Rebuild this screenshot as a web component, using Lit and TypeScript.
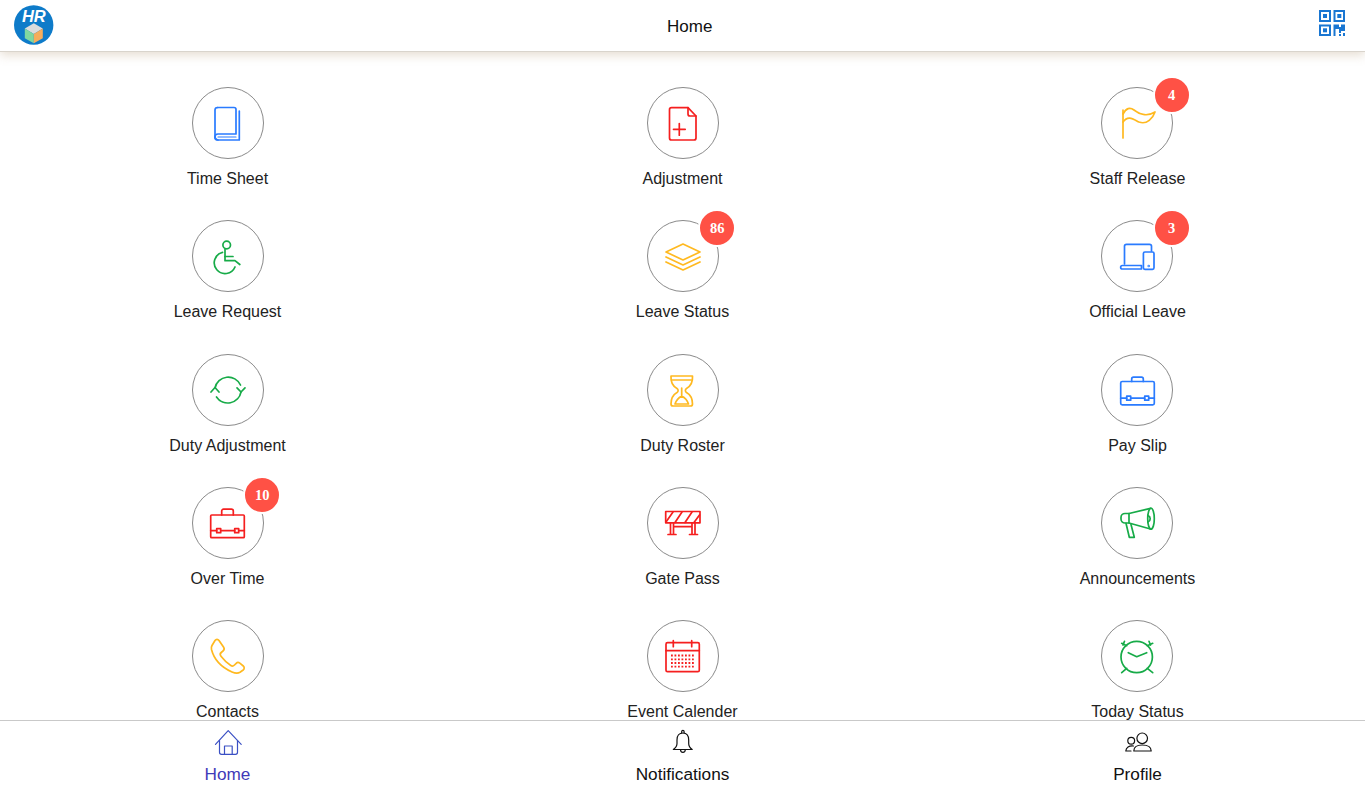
import { LitElement, html, css, svg } from "lit";
import { customElement } from "lit/decorators.js";

const BLUE = "#2a7bff", RED = "#f51f1f", YEL = "#ffb920", GRN = "#17ab48";

const ICONS: Record<string, any> = {
  book: svg`<path d="M25.500 20.500H42a2 2 0 0 1 2 2V47H26a3 3 0 0 0 0 6H47.300V24"/><path d="M23 50V23a2.500 2.500 0 0 1 2.500-2.500"/><path d="M23 50a3 3 0 0 0 3 3"/><path d="M26 50H44" stroke-width="1.200"/>`,
  doc: svg`<path d="M24.500 20.700H41L49 29V51a2 2 0 0 1-2 2H24.500a2 2 0 0 1-2-2V22.700a2 2 0 0 1 2-2Z"/><path d="M41 20.700V27a2 2 0 0 0 2 2H49"/><path d="M32.300 36.500V48.200M26.500 42.300H38.200"/>`,
  flag: svg`<path d="M22 23V51"/><path d="M22 27C25 21 29 20 33 23C38 27 46 30 54 25C52 31 46 38 38 35C32 32 27 28 22 35"/>`,
  chair: svg`<circle cx="34.700" cy="25" r="3.800"/><path d="M33 29V40.700H43L47.800 44.500"/><path d="M33 36.500H41"/><path d="M30.500 32.300A10.800 10.800 0 1 0 43 47"/>`,
  layers: svg`<path d="M36 24L53 32L36 40L19 32Z"/><path d="M19 37L36 45L53 37"/><path d="M19 42L36 50L53 42"/>`,
  device: svg`<path d="M23.500 44V26.300a2 2 0 0 1 2-2H48.500a2 2 0 0 1 2 2V31"/><path d="M21.400 45.500H40.500V49H21.400a1.700 1.700 0 0 1 0-3.500Z"/><rect x="42.400" y="32" width="10.600" height="17.300" rx="1.500"/><circle cx="47.700" cy="46" r=".4"/>`,
  sync: svg`<path d="M23 34A13.500 13.500 0 0 1 48.500 31"/><path d="M49 38A13.500 13.500 0 0 1 24.500 43"/><path d="M19 38L23 33.500L27 38"/><path d="M45 33.800L49 38L53 33.800"/>`,
  glass: svg`<path d="M24 22H45.500C46 29 43 32.500 39.500 34.500C38 35.500 38 37.500 39.500 38.500C43 40.500 45.500 44 45.500 50Q45.500 52 43.500 52H26Q24 52 24 50C24 44 26.500 40.500 30 38.500C31.500 37.500 31.500 35.500 30 34.500C26.500 32.500 23.500 29 24 22Z"/><path d="M25 26H44.500"/><path d="M34.700 34V42C31 44 29 47 28 50H41.500C40.500 47 38.500 44 34.700 42"/>`,
  case1: svg`<rect x="19.700" y="27.500" width="33.600" height="23.300" rx="1.500"/><path d="M30.700 27.500V25a1.800 1.800 0 0 1 1.800-1.800H40.500a1.800 1.800 0 0 1 1.800 1.800V27.500"/><path d="M19.700 44.200H25.700M29.700 44.200H43.700M47.700 44.200H53.300"/><rect x="25.700" y="42.200" width="4" height="4"/><rect x="43.700" y="42.200" width="4" height="4"/>`,
  case2: svg`<rect x="18.700" y="28" width="33.600" height="22.700" rx="1"/><path d="M29.700 28V24a1.800 1.800 0 0 1 1.800-1.800H39.500a1.800 1.800 0 0 1 1.800 1.800V28"/><path d="M18.700 43.700H24.700M28.700 43.700H42.700M46.700 43.700H52.300"/><rect x="24.700" y="41.700" width="4" height="4"/><rect x="42.700" y="41.700" width="4" height="4"/>`,
  gate: svg`<rect x="18.700" y="24.500" width="34.300" height="11.300"/><path d="M19 35L26 25M28 35.500L35 25M38 35.500L45 25M47 35.500L52.500 28"/><path d="M23.500 36V47M26.500 36V47M45 36V47M48 36V47M21 47.500H29M42.500 47.500H50.500M26.500 39.700H45"/>`,
  horn: svg`<path d="M28 26.500H24A4 4 0 0 0 20 30.500V32A4 4 0 0 0 24 36H28Z"/><path d="M28 26.500L49.500 21.300M28 36L49.500 42"/><ellipse cx="50" cy="31.700" rx="3.300" ry="10.500"/><path d="M47 28.500A3.500 3.500 0 0 1 47 35"/><path d="M25 36.300L28.300 50.300H33.300L30 37.500"/>`,
  phone: svg`<path d="M20 25.500L23 20.500C24 19 26 19 27 20.500L31.500 27C32.500 28.500 32.300 30 31 31L29.200 32.500C28 33.500 28 35 29 36.300C32 40.300 35 43 38.800 45.500C40 46.300 41.500 46 42.500 45L44.200 43.300C45.200 42.300 46.700 42.300 47.800 43.200L51.300 46C52.500 47 52.500 49 51.200 50L48 52.300C46 53.500 43 53.300 40 52C30 47.500 22 39.500 19.500 29.500C19.200 28 19.300 26.700 20 25.500Z"/>`,
  cal: svg`<rect x="19" y="22.700" width="33.300" height="29" rx="1.500"/><path d="M19 30.700H52.300"/><path d="M26.300 20.700V26.700M44.700 20.700V26.700"/><path class="dots" d="M24 35.500H48M24 39.300H48M24 43H48M24 46.700H48"/>`,
  clock: svg`<circle cx="35.700" cy="37" r="15.700"/><path d="M27.300 32.700L35.700 36.700L45.700 32.700"/><path d="M20.700 23.300L25.700 25.700M46.300 25.700L51.700 23.300"/><path d="M23.500 21.300L22 25M48 21.300L49.500 25"/><path d="M20.700 52.700L25.700 48.300M46.300 48.300L51.700 52.700"/>`,
};

const ITEMS = [
  ["Time Sheet", "book", BLUE], ["Adjustment", "doc", RED], ["Staff Release", "flag", YEL, "4"],
  ["Leave Request", "chair", GRN], ["Leave Status", "layers", YEL, "86"], ["Official Leave", "device", BLUE, "3"],
  ["Duty Adjustment", "sync", GRN], ["Duty Roster", "glass", YEL], ["Pay Slip", "case1", BLUE],
  ["Over Time", "case2", RED, "10"], ["Gate Pass", "gate", RED], ["Announcements", "horn", GRN],
  ["Contacts", "phone", YEL], ["Event Calender", "cal", RED], ["Today Status", "clock", GRN],
];

@customElement("app-root")
export class AppRoot extends LitElement {
  static styles = css`
    :host { display: flex; flex-direction: column; height: 800px; overflow: hidden; background: #fff; font-family: "Liberation Sans", Arial, sans-serif; color: #222; }
    .top { flex: none; height: 51px; display: grid; grid-template-columns: 1fr auto 1fr; align-items: center; padding: 0 20px 0 13.500px; background: #fff; border-bottom: 1px solid #d9d4cc; box-shadow: 0 3px 10px rgba(170, 140, 100, .3); position: relative; z-index: 1; }
    .logo { width: 40px; height: 40px; display: block; margin-top: -1px; }
    .title { font-size: 17px; color: #111; padding-left: 21px; padding-top: 2px; }
    .qr { width: 26px; height: 26px; display: block; justify-self: end; margin-top: -5px; }
    .grid { flex: 1; min-height: 0; overflow: hidden; box-sizing: border-box; padding-top: 35px; display: grid; grid-template-columns: repeat(3, 1fr); grid-auto-rows: 133.33px; }
    .cell { display: flex; flex-direction: column; align-items: center; }
    .ring { position: relative; box-sizing: border-box; width: 72px; height: 72px; border: 1px solid #8a8a8a; border-radius: 50%; flex: none; }
    .cell:nth-child(3n) .ring { margin-right: 1px; }
    .ring svg { position: absolute; left: -1px; top: -1px; width: 72px; height: 72px; fill: none; stroke-width: 1.700; stroke-linecap: round; stroke-linejoin: round; }
    .ring svg .dots { stroke-width: 1.800; stroke-linecap: butt; stroke-dasharray: 1.800 1.700; }
    .badge { position: absolute; left: 50.700px; top: -12.300px; box-sizing: border-box; width: 38px; height: 38px; border: 2px solid #fff; border-radius: 50%; background: #ff5145; color: #fff; font: bold 14.500px/34px "Liberation Serif", "Times New Roman", serif; text-align: center; }
    .label { margin-top: 11px; font-size: 16px; line-height: 18px; white-space: nowrap; color: #222; }
    .nav { flex: none; height: 80px; box-sizing: border-box; border-top: 1px solid #c9c9c9; display: grid; grid-template-columns: repeat(3, 1fr); background: #fff; position: relative; }
    .tab { display: flex; flex-direction: column; align-items: center; padding-top: 5px; font-size: 17.200px; line-height: 20px; color: #111; }
    .tab svg { width: 32px; height: 32px; margin-bottom: 6px; fill: none; stroke: #111; stroke-width: 1.200; stroke-linejoin: round; stroke-linecap: round; }
    .tab.on { color: #3f3ab8; }
    .tab.on svg { stroke: #3b50c4; }
  `;

  render() {
    return html`
      <header class="top">
        <svg class="logo" viewBox="0 0 40 40" aria-label="HR logo">
          <circle cx="19.700" cy="20" r="19.700" fill="#0e7bc9" />
          <text x="19.800" y="17" text-anchor="middle" font-family="Liberation Sans" font-weight="700" font-style="italic" font-size="16.500" fill="#fff">HR</text>
          <path d="M19.800 18.300L28.800 23.500L19.800 29L10.800 23.500Z" fill="#dcdcdc" />
          <path d="M10.800 23.500L19.800 29V38.300L10.800 33.300Z" fill="#80d8a0" />
          <path d="M28.800 23.500L19.800 29V38.300L28.800 33.300Z" fill="#f6ad5c" />
        </svg>
        <span class="title">Home</span>
        <svg class="qr" viewBox="0 0 26 26" fill="#1976d2" aria-label="QR code">
          <path fill-rule="evenodd" d="M0 0H12V12H0ZM2 2V10H10V2ZM14.500 0H26V12H14.500ZM16.500 2V10H24V2ZM0 14.500H12V26H0ZM2 16.500V24H10V16.500Z" />
          <rect x="4" y="4" width="4" height="4" /><rect x="18.300" y="4" width="4" height="4" /><rect x="4" y="18.300" width="4" height="4" />
          <path d="M14.500 14.500H20V17H22V14.500H26V21H22V23H20V19H16.500V26H14.500Z" />
          <rect x="20" y="24" width="2" height="2" /><rect x="24" y="23" width="2" height="3" />
        </svg>
      </header>
      <main class="grid">
        ${ITEMS.map(([name, icon, color, badge]) => html`
          <div class="cell">
            <div class="ring">
              <svg viewBox="0 0 72 72" style="stroke:${color}">${ICONS[icon]}</svg>
              ${badge ? html`<span class="badge">${badge}</span>` : ""}
            </div>
            <span class="label">${name}</span>
          </div>`)}
      </main>
      <nav class="nav">
        <div class="tab on">
          <svg viewBox="0 0 32 32"><path d="M3.500 18.300L16.200 4.700L29.200 18.300"/><path d="M7.500 14.500V26.300a2 2 0 0 0 2 2H23.500a2 2 0 0 0 2-2V14.500"/><path d="M12.500 28.300V20H20.200V28.300"/></svg>
          Home
        </div>
        <div class="tab">
          <svg viewBox="0 0 32 32"><path d="M16 7C12 7 10 10 10 14V17.500C10 20 8.500 22 6.300 23.500H25.200C23 22 21.700 20 21.700 17.500V14C21.700 10 20 7 16 7Z"/><path d="M14.700 7V5.500a1.200 1.200 0 0 1 2.400 0V7"/><path d="M13.500 23.500a2.400 2.800 0 0 0 4.800 0"/></svg>
          Notifications
        </div>
        <div class="tab">
          <svg viewBox="0 0 32 32"><circle cx="20.200" cy="12.300" r="5.300"/><path d="M11.800 25C11.800 21 15 19 20.200 19S29.200 21 29.200 25Z"/><circle cx="9.200" cy="14.700" r="3.400"/><path d="M11.500 20C7 19.500 4 21.500 3.800 25H9"/></svg>
          Profile
        </div>
      </nav>
    `;
  }
}
